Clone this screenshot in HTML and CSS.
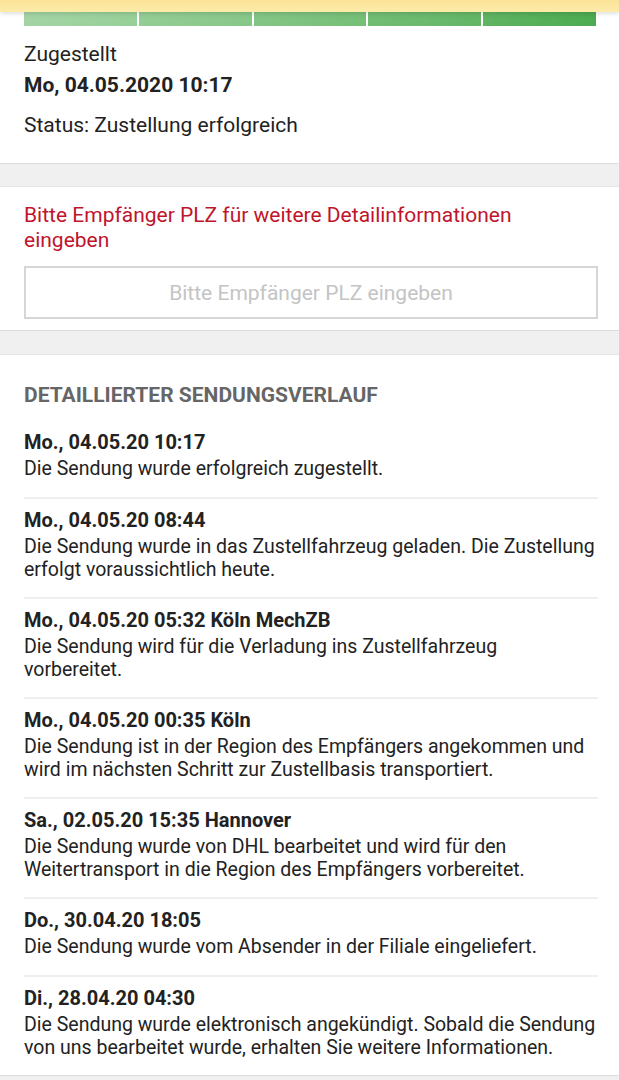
FILE: index.html
```html
<!DOCTYPE html>
<html lang="de">
<head>
<meta charset="utf-8">
<link rel="stylesheet" href="styles.css">
</head>
<body>
<div class="topbar"></div>
<section class="card status-card">
  <div class="progress">
    <span class="seg s1"></span><span class="seg s2"></span><span class="seg s3"></span><span class="seg s4"></span><span class="seg s5"></span>
  </div>
  <div class="state">Zugestellt</div>
  <div class="date">Mo, 04.05.2020 10:17</div>
  <div class="status">Status: Zustellung erfolgreich</div>
</section>
<section class="card plz-card">
  <div class="plz-hint">Bitte Empfänger PLZ für weitere Detailinformationen eingeben</div>
  <div class="plz-input">Bitte Empfänger PLZ eingeben</div>
</section>
<section class="card history">
  <h2 class="history-title">DETAILLIERTER SENDUNGSVERLAUF</h2>
  <div class="event event-short">
    <div class="event-head">Mo., 04.05.20 10:17</div>
    <div class="event-text">Die Sendung wurde erfolgreich zugestellt.</div>
  </div>
  <div class="event">
    <div class="event-head">Mo., 04.05.20 08:44</div>
    <div class="event-text">Die Sendung wurde in das Zustellfahrzeug geladen. Die Zustellung erfolgt voraussichtlich heute.</div>
  </div>
  <div class="event">
    <div class="event-head">Mo., 04.05.20 05:32 Köln MechZB</div>
    <div class="event-text">Die Sendung wird für die Verladung ins Zustellfahrzeug vorbereitet.</div>
  </div>
  <div class="event">
    <div class="event-head">Mo., 04.05.20 00:35 Köln</div>
    <div class="event-text">Die Sendung ist in der Region des Empfängers angekommen und wird im nächsten Schritt zur Zustellbasis transportiert.</div>
  </div>
  <div class="event">
    <div class="event-head">Sa., 02.05.20 15:35 Hannover</div>
    <div class="event-text">Die Sendung wurde von DHL bearbeitet und wird für den Weitertransport in die Region des Empfängers vorbereitet.</div>
  </div>
  <div class="event event-short">
    <div class="event-head">Do., 30.04.20 18:05</div>
    <div class="event-text">Die Sendung wurde vom Absender in der Filiale eingeliefert.</div>
  </div>
  <div class="event">
    <div class="event-head">Di., 28.04.20 04:30</div>
    <div class="event-text">Die Sendung wurde elektronisch angekündigt. Sobald die Sendung von uns bearbeitet wurde, erhalten Sie weitere Informationen.</div>
  </div>
</section>
</body>
</html>
```
FILE: styles.css
```css
* { box-sizing: border-box; }
html, body { margin: 0; padding: 0; }
body {
  background: #f0f0f0;
  font-family: Roboto, "Noto Sans", Arial, sans-serif;
  color: #222;
  font-size: 19.5px;
  width: 619px;
  overflow: hidden;
}
.topbar {
  height: 12px;
  background: linear-gradient(#fbe49a, #fdeba8);
  box-shadow: 0 2px 4px rgba(0,0,0,0.12);
  position: relative;
  z-index: 2;
}
.card {
  background: #fff;
  border-bottom: 1px solid #dcdcdc;
  border-top: 1px solid #e4e4e4;
  padding: 0 21px 0 24px;
}
.status-card {
  border-top: 0;
  padding-bottom: 25px;
}
.progress {
  display: flex;
  gap: 2px;
  height: 14px;
  width: 572px;
}
.seg { flex: 1; }
.s1 { background: linear-gradient(90deg, #a3d4a4, #97cf98); }
.s2 { background: linear-gradient(90deg, #94cd95, #86c787); }
.s3 { background: linear-gradient(90deg, #84c585, #75bf77); }
.s4 { background: linear-gradient(90deg, #72bd74, #63b666); }
.s5 { background: linear-gradient(90deg, #60b463, #4cab50); }
.state {
  margin-top: 15px;
  line-height: 26px;
  font-size: 21px;
}
.date {
  margin-top: 5px;
  line-height: 26px;
  font-size: 21px;
  font-weight: 700;
}
.status {
  margin-top: 14px;
  line-height: 26px;
  font-size: 21px;
}
.plz-card {
  margin-top: 22px;
  padding-top: 16px;
  padding-bottom: 11px;
}
.plz-hint {
  color: #c0142c;
  font-size: 21px;
  line-height: 25px;
}
.plz-input {
  margin-top: 13px;
  height: 53px;
  border: 2px solid #d6d6d6;
  color: #c4c4c4;
  font-size: 21px;
  display: flex;
  align-items: center;
  justify-content: center;
}
.history {
  margin-top: 23px;
  padding-top: 27px;
}
.history-title {
  margin: 0 0 13px;
  font-size: 21px;
  line-height: 26px;
  font-weight: 700;
  color: #666;
}
.event {
  padding: 8px 0 16px;
  border-bottom: 2px solid #efefef;
}
.event-short { padding-bottom: 17px; }
.event:last-child { border-bottom: 0; }
.event-head {
  font-weight: 700;
  font-size: 20px;
  line-height: 26px;
}
.event-text {
  margin-top: 2px;
  line-height: 23px;
}
```
